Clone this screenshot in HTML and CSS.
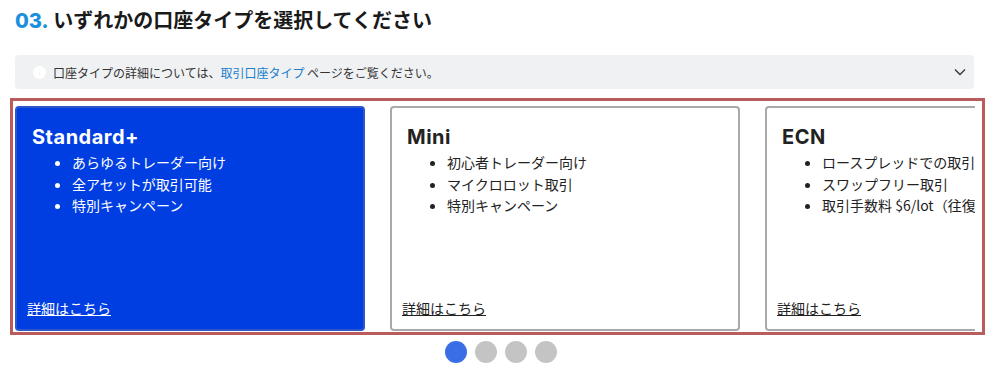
FILE: index.html
```html
<!DOCTYPE html>
<html lang="ja">
  <head>
    <meta charset="UTF-8" />
    <meta name="viewport" content="width=device-width, initial-scale=1.0" />
    <title>口座タイプの選択</title>
    <link rel="stylesheet" href="styles.css">
  </head>
  <body>
    <div class="step">
      <h2 class="step-title"><span class="step-num">03.</span> いずれかの口座タイプを選択してください</h2>

      <div class="notice">
        <span class="notice-icon">
          <svg width="13" height="13" viewBox="0 0 13 13">
            <circle cx="6.5" cy="6.5" r="6.5" fill="#fff" />
            <rect x="6" y="5.5" width="1.2" height="4" fill="#f4f5f7" />
            <circle cx="6.6" cy="3.8" r="0.8" fill="#f4f5f7" />
          </svg>
        </span>
        <span class="notice-text">口座タイプの詳細については、<a href="#">取引口座タイプ</a> ページをご覧ください。</span>
        <svg class="notice-chevron" width="12" height="8" viewBox="0 0 12 8">
          <path d="M1 1.5 L6 6.5 L11 1.5" fill="none" stroke="#333" stroke-width="1.3" />
        </svg>
      </div>

      <div class="slider-frame">
        <div class="slider">
          <div class="card card-active">
            <h3>Standard+</h3>
            <ul>
              <li>あらゆるトレーダー向け</li>
              <li>全アセットが取引可能</li>
              <li>特別キャンペーン</li>
            </ul>
            <a class="card-link" href="#">詳細はこちら</a>
          </div>
          <div class="card">
            <h3>Mini</h3>
            <ul>
              <li>初心者トレーダー向け</li>
              <li>マイクロロット取引</li>
              <li>特別キャンペーン</li>
            </ul>
            <a class="card-link" href="#">詳細はこちら</a>
          </div>
          <div class="card">
            <h3>ECN</h3>
            <ul>
              <li>ロースプレッドでの取引</li>
              <li>スワップフリー取引</li>
              <li>取引手数料 $6/lot（往復）</li>
            </ul>
            <a class="card-link" href="#">詳細はこちら</a>
          </div>
        </div>
      </div>

      <div class="dots">
        <span class="dot dot-active"></span>
        <span class="dot"></span>
        <span class="dot"></span>
        <span class="dot"></span>
      </div>
    </div>
  </body>
</html>
```

FILE: styles.css
```css
body {
  margin: 0;
  background: #fff;
  color: #222;
  font-family: "Noto Sans CJK JP", "Liberation Sans", sans-serif;
}

.step {
  padding: 0 15px;
  width: 959px;
}

.step-title {
  margin: 0;
  padding-top: 6px;
  font-size: 20px;
  line-height: 28px;
  font-weight: 700;
  color: #1a1a1a;
}

.step-num {
  font-family: Inter, "Liberation Sans", sans-serif;
  font-weight: 800;
  color: #1b8fdb;
}

.notice {
  margin-top: 20px;
  height: 34px;
  display: flex;
  align-items: center;
  background: #f0f1f3;
  border-radius: 4px;
  padding: 0 8px 0 18px;
}

.notice-icon {
  display: flex;
  width: 13px;
  height: 13px;
}

.notice-text {
  margin-left: 7px;
  font-size: 12px;
  color: #333;
  flex: 1;
}

.notice-text a {
  color: #1a7fcc;
  text-decoration: none;
}

.notice-chevron {
  display: block;
}

.slider-frame {
  margin-top: 9px;
  margin-left: -5px;
  width: 975px;
  box-sizing: border-box;
  border: 3px solid #b95c5c;
  padding: 5px 7px 1px 2px;
}

.slider {
  display: flex;
  gap: 25px;
  overflow: hidden;
}

.card {
  flex: 0 0 350px;
  height: 225px;
  box-sizing: border-box;
  border: 2px solid #a9a9a9;
  border-radius: 4px;
  background: #fff;
  padding: 17px 15px 11px 15px;
  display: flex;
  flex-direction: column;
  color: #222;
}

.card-active {
  background: #003ee2;
  border-color: #2c57c9;
  color: #fff;
}

.card h3 {
  margin: 0;
  font-family: Inter, "Liberation Sans", sans-serif;
  font-size: 20px;
  line-height: 24px;
  font-weight: 700;
  letter-spacing: 0.5px;
}

.card ul {
  margin: 3px 0 0 0;
  padding-left: 40px;
  font-size: 14px;
  line-height: 21.5px;
  white-space: nowrap;
}

.card-link {
  margin-top: auto;
  margin-left: -5px;
  font-size: 14px;
  line-height: 20px;
  color: inherit;
  text-decoration: underline;
  align-self: flex-start;
}

.dots {
  margin-top: 6px;
  display: flex;
  justify-content: center;
  gap: 8px;
  padding-left: 12px;
}

.dot {
  width: 22px;
  height: 22px;
  border-radius: 50%;
  background: #c4c4c4;
}

.dot-active {
  background: #3a6ee6;
}
```
